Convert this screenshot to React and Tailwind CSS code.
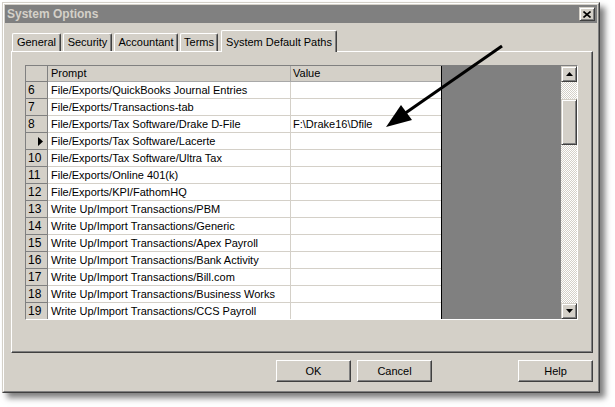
import React from "react";

const rows = [
  ["6", "File/Exports/QuickBooks Journal Entries", ""],
  ["7", "File/Exports/Transactions-tab", ""],
  ["8", "File/Exports/Tax Software/Drake D-File", "F:\\Drake16\\Dfile"],
  ["", "File/Exports/Tax Software/Lacerte", "", true],
  ["10", "File/Exports/Tax Software/Ultra Tax", ""],
  ["11", "File/Exports/Online 401(k)", ""],
  ["12", "File/Exports/KPI/FathomHQ", ""],
  ["13", "Write Up/Import Transactions/PBM", ""],
  ["14", "Write Up/Import Transactions/Generic", ""],
  ["15", "Write Up/Import Transactions/Apex Payroll", ""],
  ["16", "Write Up/Import Transactions/Bank Activity", ""],
  ["17", "Write Up/Import Transactions/Bill.com", ""],
  ["18", "Write Up/Import Transactions/Business Works", ""],
  ["19", "Write Up/Import Transactions/CCS Payroll", ""],
];

const raised =
  "bg-[#d4d0c8] border border-t-white border-l-white border-r-[#404040] border-b-[#404040] shadow-[inset_-1px_-1px_0_#808080]";
const raisedSb =
  "bg-[#d4d0c8] border border-t-[#d4d0c8] border-l-[#d4d0c8] border-r-[#404040] border-b-[#404040] shadow-[inset_1px_1px_0_#ffffff,inset_-1px_-1px_0_#808080]";
const checker =
  "bg-[image:repeating-conic-gradient(#d4d0c8_0_25%,#ffffff_0_50%)] bg-[length:2px_2px]";

function Tab({ label, w, ml }) {
  return (
    <div
      className={`${w} ${ml} h-[18px] flex items-center justify-center rounded-t-[2px] border-t border-l border-r border-t-white border-l-white border-r-[#404040] shadow-[inset_-1px_0_0_#808080] text-[11px] text-black`}
    >
      {label}
    </div>
  );
}

function Button({ label, className }) {
  return (
    <div
      className={`${raised} ${className} w-[75px] h-[22px] flex items-center justify-center text-[11px] text-black`}
    >
      {label}
    </div>
  );
}

export default function App() {
  return (
    <div className="relative w-[615px] h-[407px] bg-white pt-[2px] pl-[2px] font-['Liberation_Sans',Arial,sans-serif] overflow-hidden">
      <div className="w-[598px] h-[391px] bg-[#d4d0c8] border border-t-[#d4d0c8] border-l-[#d4d0c8] border-r-[#404040] border-b-[#404040] shadow-[5px_5px_6px_rgba(0,0,0,0.5)]">
        <div className="h-full border border-t-white border-l-white border-r-[#808080] border-b-[#808080] p-px flex flex-col">
          {/* Title bar */}
          <div className="h-[18px] bg-[#808080] flex items-center justify-between pl-[2px] pr-[2px]">
            <span className="text-[12px] font-bold text-[#d4d0c8] leading-none">
              System Options
            </span>
            <div className={`${raisedSb} w-[16px] h-[14px] flex items-center justify-center`}>
              <svg width="8" height="7" viewBox="0 0 8 7">
                <path d="M0.5 0.5 L7.5 6.5 M7.5 0.5 L0.5 6.5" stroke="#000" strokeWidth="1.6" />
              </svg>
            </div>
          </div>

          {/* Body */}
          <div className="pl-[6px] pr-[4px] flex flex-col">
            {/* Tabs */}
            <div className="mt-[7px] h-[21px] flex items-end">
              <Tab label="General" w="w-[49px]" ml="ml-[1px]" />
              <Tab label="Security" w="w-[49px]" ml="ml-[2px]" />
              <Tab label="Accountant" w="w-[64px]" ml="ml-[2px]" />
              <Tab label="Terms" w="w-[38px]" ml="ml-[2px]" />
              <div className="relative z-10 ml-[3px] w-[116px] h-[22px] -mb-px bg-[#d4d0c8] flex items-start justify-center pt-[3px] rounded-t-[2px] border-t border-l border-r border-t-white border-l-white border-r-[#404040] shadow-[inset_-1px_0_0_#808080] text-[11px] text-black">
                System Default Paths
              </div>
            </div>

            {/* Panel */}
            <div className="h-[302px] border border-t-white border-l-white border-r-[#404040] border-b-[#404040] shadow-[inset_-1px_-1px_0_#808080] pt-[13px] pl-[13px] pr-[14px] pb-[32px]">
              <div className="w-[553px] h-[255px] border border-t-[#808080] border-l-[#808080] border-r-white border-b-white flex overflow-hidden">
                {/* Table */}
                <div className="w-[416px] h-full border-r border-r-black bg-white flex flex-col text-[11px] text-black">
                  <div className="h-[16px] shrink-0 flex bg-[#d4d0c8]">
                    <div className="w-[22px] h-full border-r border-b border-[#808080]" />
                    <div className="w-[243px] h-full border-r border-b border-[#a8a8a8] pl-[3px] flex items-center">
                      Prompt
                    </div>
                    <div className="w-[150px] h-full border-b border-[#a8a8a8] pl-[2px] flex items-center">
                      Value
                    </div>
                  </div>
                  {rows.map(([n, p, v, cur], i) => (
                    <div key={i} className="h-[17px] shrink-0 flex">
                      <div
                        className={`w-[22px] h-full bg-[#d4d0c8] border-r border-b border-[#808080] flex items-center text-[12px] ${
                          cur ? "justify-end pr-[4px]" : "pl-[2px]"
                        }`}
                      >
                        {cur ? (
                          <svg width="5" height="9" viewBox="0 0 5 9">
                            <path d="M0 0 L5 4.5 L0 9 Z" fill="#000" />
                          </svg>
                        ) : (
                          n
                        )}
                      </div>
                      <div className="w-[243px] h-full border-r border-b border-[#d4d0c8] pl-[3px] flex items-center whitespace-nowrap">
                        {p}
                      </div>
                      <div className="w-[150px] h-full border-b border-[#d4d0c8] pl-[2px] flex items-center whitespace-nowrap">
                        {v}
                      </div>
                    </div>
                  ))}
                </div>

                {/* Gray area */}
                <div className="w-[119px] h-full bg-[#808080]" />

                {/* Scrollbar */}
                <div className="w-[16px] h-full flex flex-col">
                  <div className={`${raisedSb} h-[16px] shrink-0 flex items-center justify-center`}>
                    <svg width="7" height="4" viewBox="0 0 7 4">
                      <path d="M3.5 0 L7 4 L0 4 Z" fill="#000" />
                    </svg>
                  </div>
                  <div className={`h-[17px] shrink-0 ${checker}`} />
                  <div className={`${raisedSb} h-[46px] shrink-0`} />
                  <div className={`flex-1 ${checker}`} />
                  <div className={`${raisedSb} h-[16px] shrink-0 flex items-center justify-center`}>
                    <svg width="7" height="4" viewBox="0 0 7 4">
                      <path d="M0 0 L7 0 L3.5 4 Z" fill="#000" />
                    </svg>
                  </div>
                </div>
              </div>
            </div>

            {/* Buttons */}
            <div className="mt-[7px] h-[22px] flex">
              <Button label="OK" className="ml-[265px]" />
              <Button label="Cancel" className="ml-[6px]" />
              <Button label="Help" className="ml-auto" />
            </div>
          </div>
        </div>
      </div>

      {/* Annotation arrow */}
      <svg className="absolute left-0 top-0 pointer-events-none" width="615" height="407" viewBox="0 0 615 407">
        <line x1="502" y1="46" x2="404" y2="114" stroke="#000" strokeWidth="3" />
        <polygon points="386,127 401,105 412,120" fill="#000" />
      </svg>
    </div>
  );
}
